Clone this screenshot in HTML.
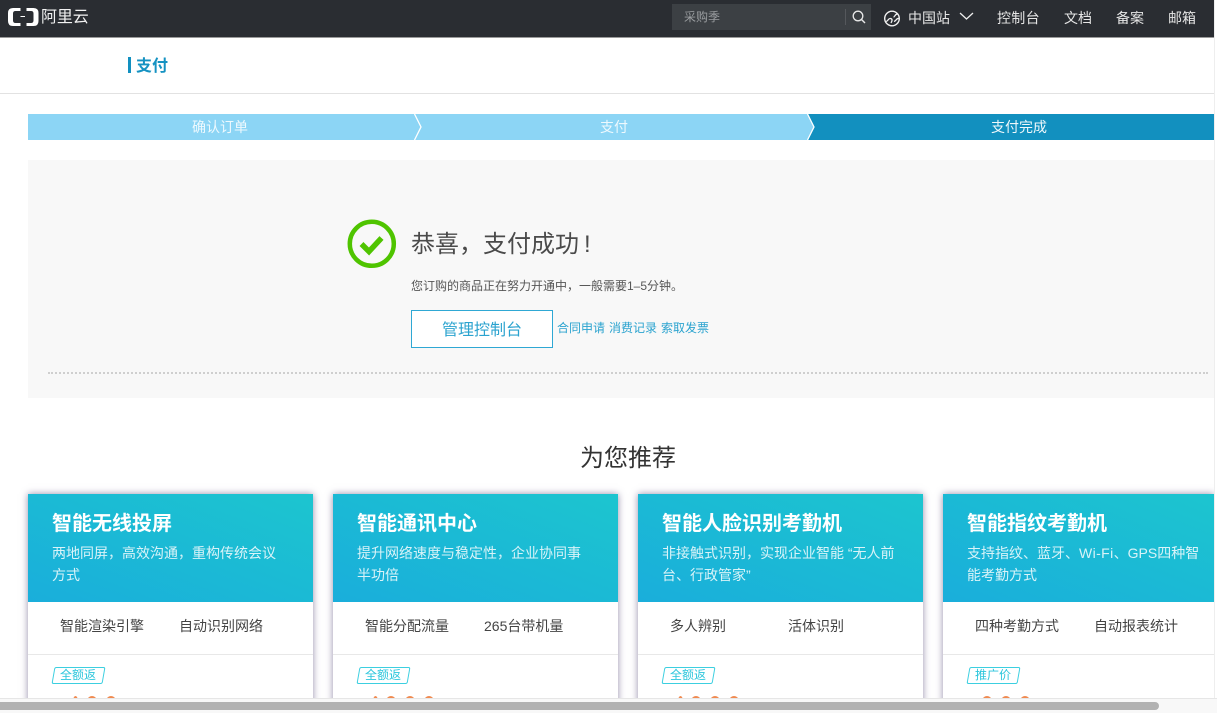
<!DOCTYPE html>
<html lang="zh"><head><meta charset="utf-8">
<style>
html,body{margin:0;padding:0;width:1217px;height:713px;overflow:hidden;background:#fff}
body{position:relative;font-family:"Liberation Sans","Noto Sans CJK SC",sans-serif;color:#444}
.a{position:absolute;white-space:nowrap}
.card{position:absolute;top:494px;height:240px;background:#fff;box-shadow:0 0 7px rgba(80,65,115,.6)}
.head{position:absolute;left:0;top:0;right:0;height:108px;background:linear-gradient(to top right,#1aaedb,#1cc5cf)}
.t{position:absolute;left:24px;top:16px;font-size:20px;line-height:29px;font-weight:bold;color:#fff;white-space:nowrap}
.d{position:absolute;left:24px;top:48px;font-size:14px;line-height:22px;color:#d9f3f8;width:240px}
.f{position:absolute;top:121px;font-size:14px;line-height:22px;color:#444;white-space:nowrap}
.l{position:absolute;left:0;right:0;top:160px;height:1px;background:#e8e8e8}
.tag{position:absolute;left:25px;top:173px;width:49px;height:15px;border:1px solid #3ccfe0;border-radius:2px;transform:skewX(-10deg)}
.tt{position:absolute;left:32px;top:173px;font-size:12px;line-height:17px;color:#2cc6dc;white-space:nowrap}
.dot{position:absolute;top:202px;width:10px;height:10px;border-radius:50%;background:#f08a50}
</style></head><body>

<div class="a" style="left:0;top:0;width:1214px;height:38px;background:#2a2d32;border-bottom:1px solid #9a9a9a;box-sizing:border-box"></div>
<svg class="a" style="left:0;top:0" width="40" height="34" viewBox="0 0 40 34"><path d="M20.500 8H13Q8 8 8 13V21Q8 26 13 26H20.500V23H15.500Q13 23 13 20.500V13.500Q13 11 15.500 11H20.500Z" fill="#fff"/><path d="M26.500 8H33.500Q38.500 8 38.500 13V21Q38.500 26 33.500 26H26.500V23H31Q33.500 23 33.500 20.500V13.500Q33.500 11 31 11H26.500Z" fill="#fff"/><path d="M20.500 16.500H25" stroke="#fff" stroke-width="1"/></svg>
<div class="a" style="left:41px;top:7px;font-size:16px;line-height:22px;color:#f2f2f2;letter-spacing:-.1px">阿里云</div>

<div class="a" style="left:672px;top:4px;width:199px;height:26px;background:#3c4044"></div>
<div class="a" style="left:684px;top:8px;font-size:12px;line-height:18px;color:#9a9da0">采购季</div>
<div class="a" style="left:845px;top:9px;width:1px;height:16px;background:#55585c"></div>
<svg class="a" style="left:851px;top:9px" width="16" height="16" viewBox="0 0 16 16"><circle cx="7" cy="7" r="4.800" fill="none" stroke="#e8e8e8" stroke-width="1.300"/><path d="M10.500 10.500L14 14" stroke="#e8e8e8" stroke-width="1.400"/></svg>
<svg class="a" style="left:883px;top:9px" width="18" height="18" viewBox="0 0 18 18"><circle cx="9" cy="9.500" r="7.300" fill="none" stroke="#f0f0f0" stroke-width="1.400"/><path d="M2.500 12.500C5 13 5 9 7.500 9.500S9 12 8 14M15 5C12 4.500 12 8 10.500 8M16 9.500C13 9 13.500 12 11 12.500" fill="none" stroke="#f0f0f0" stroke-width="1.300"/></svg>
<div class="a" style="left:908px;top:8px;font-size:14px;line-height:20px;color:#e6e6e6">中国站</div>
<svg class="a" style="left:959px;top:12px" width="15" height="9" viewBox="0 0 15 9"><path d="M1 1L7.500 7L14 1" fill="none" stroke="#eee" stroke-width="1.300"/></svg>
<div class="a" style="left:997px;top:8px;font-size:14px;line-height:20px;color:#e6e6e6;letter-spacing:.3px">控制台</div>
<div class="a" style="left:1064px;top:8px;font-size:14px;line-height:20px;color:#e6e6e6">文档</div>
<div class="a" style="left:1116px;top:8px;font-size:14px;line-height:20px;color:#e6e6e6">备案</div>
<div class="a" style="left:1168px;top:8px;font-size:14px;line-height:20px;color:#e6e6e6">邮箱</div>

<div class="a" style="left:128px;top:57px;width:3px;height:16px;background:#1290c0"></div>
<div class="a" style="left:136px;top:55px;font-size:16px;line-height:23px;font-weight:bold;color:#1592c2">支付</div>
<div class="a" style="left:0;top:93px;width:1214px;height:1px;background:#e2e2e2"></div>

<div class="a" style="left:28px;top:114px;width:1186px;height:26px;background:#8cd5f5"></div>
<div class="a" style="left:806px;top:114px;width:408px;height:26px;background:#1290bf"></div>
<svg class="a" style="left:411px;top:114px" width="12" height="26" viewBox="0 0 12 26"><path d="M3.500 0L10 13L3.500 26" fill="none" stroke="#fff" stroke-width="1.300"/></svg>
<svg class="a" style="left:804px;top:114px" width="14" height="26" viewBox="0 0 14 26"><path d="M0 0H3.500L10 13L3.500 26H0Z" fill="#8cd5f5"/><path d="M3.500 0L10 13L3.500 26" fill="none" stroke="#fff" stroke-width="1.300"/></svg>
<div class="a" style="left:192px;top:117px;font-size:14px;line-height:20px;color:#eef9fe">确认订单</div>
<div class="a" style="left:600px;top:117px;font-size:14px;line-height:20px;color:#eef9fe">支付</div>
<div class="a" style="left:991px;top:117px;font-size:14px;line-height:20px;color:#f0f8fb">支付完成</div>

<div class="a" style="left:28px;top:160px;width:1186px;height:238px;background:#f8f8f8"></div>
<svg class="a" style="left:347px;top:219px" width="50" height="50" viewBox="0 0 50 50"><circle cx="24.800" cy="24.800" r="22" fill="none" stroke="#4fc400" stroke-width="4.500"/><path d="M14.500 25L22 32.500L34.500 19" fill="none" stroke="#4fc400" stroke-width="5.500"/></svg>
<div class="a" style="left:411px;top:228px;font-size:24px;line-height:34px;color:#4a4a4a">恭喜，支付成功<span style="margin-left:5px">!</span></div>
<div class="a" style="left:411px;top:277px;font-size:12px;line-height:19px;color:#555">您订购的商品正在努力开通中，一般需要1–5分钟。</div>
<div class="a" style="left:411px;top:310px;width:142px;height:38px;box-sizing:border-box;border:1px solid #2fa8d4;background:#fff;font-size:16px;line-height:39px;text-align:center;color:#2ba3cf">管理控制台</div>
<div class="a" style="left:557px;top:319px;font-size:12px;line-height:19px;color:#2ba3cf">合同申请</div>
<div class="a" style="left:609px;top:319px;font-size:12px;line-height:19px;color:#2ba3cf">消费记录</div>
<div class="a" style="left:661px;top:319px;font-size:12px;line-height:19px;color:#2ba3cf">索取发票</div>
<div class="a" style="left:48px;top:372px;width:1160px;height:0;border-top:2px dotted #cfcfcf"></div>

<div class="a" style="left:580px;top:442px;font-size:24px;line-height:34px;color:#333">为您推荐</div>

<div class="card" style="left:28px;width:285px">
 <div class="head"></div><div class="t">智能无线投屏</div><div class="d">两地同屏，高效沟通，重构传统会议<br>方式</div>
 <div class="f" style="left:32px">智能渲染引擎</div><div class="f" style="left:151px">自动识别网络</div><div class="l"></div>
 <div class="tag"></div><div class="tt">全额返</div>
 <div class="dot" style="left:45px;width:5px"></div><div class="dot" style="left:59px"></div><div class="dot" style="left:78px"></div>
</div>
<div class="card" style="left:333px;width:285px">
 <div class="head"></div><div class="t">智能通讯中心</div><div class="d">提升网络速度与稳定性，企业协同事<br>半功倍</div>
 <div class="f" style="left:32px">智能分配流量</div><div class="f" style="left:151px">265台带机量</div><div class="l"></div>
 <div class="tag"></div><div class="tt">全额返</div>
 <div class="dot" style="left:40px;width:5px"></div><div class="dot" style="left:53px"></div><div class="dot" style="left:72px"></div><div class="dot" style="left:91px"></div>
</div>
<div class="card" style="left:638px;width:285px">
 <div class="head"></div><div class="t">智能人脸识别考勤机</div><div class="d">非接触式识别，实现企业智能 “无人前<br>台、行政管家”</div>
 <div class="f" style="left:32px">多人辨别</div><div class="f" style="left:150px">活体识别</div><div class="l"></div>
 <div class="tag"></div><div class="tt">全额返</div>
 <div class="dot" style="left:40px;width:5px"></div><div class="dot" style="left:53px"></div><div class="dot" style="left:72px"></div><div class="dot" style="left:91px"></div>
</div>
<div class="card" style="left:943px;width:271px;clip-path:inset(-10px 0 -10px -10px)">
 <div class="head"></div><div class="t">智能指纹考勤机</div><div class="d">支持指纹、蓝牙、<span style="letter-spacing:.4px">Wi-Fi</span>、GPS四种智<br>能考勤方式</div>
 <div class="f" style="left:32px">四种考勤方式</div><div class="f" style="left:151px">自动报表统计</div><div class="l"></div>
 <div class="tag"></div><div class="tt">推广价</div>
 <div class="dot" style="left:39px"></div><div class="dot" style="left:58px"></div><div class="dot" style="left:77px"></div>
</div>

<div class="a" style="left:1214px;top:0;width:3px;height:713px;background:#fff;border-left:1px solid #eee;box-sizing:border-box"></div>
<div class="a" style="left:0;top:698px;width:1217px;height:15px;background:#f8f8f8;border-top:1px solid #e6e6e6;box-sizing:border-box"></div>
<div class="a" style="left:0;top:702px;width:1159px;height:8px;background:#b2b2b2;border-radius:0 4px 4px 0"></div>
</body></html>
